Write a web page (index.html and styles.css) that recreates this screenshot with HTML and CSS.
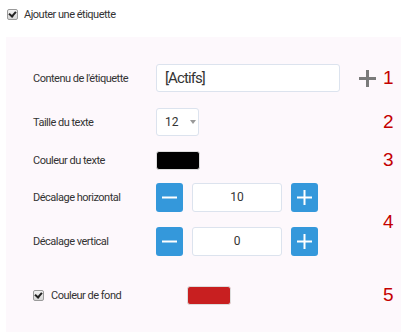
FILE: index.html
```html
<!DOCTYPE html>
<html lang="fr">
<head>
  <meta charset="UTF-8" />
  <title>Étiquette</title>
  <link rel="stylesheet" href="styles.css">
</head>
<body>
  <label class="toggle">
    <span class="check"></span> Ajouter une étiquette
  </label>

  <div class="panel">
    <div class="label r1">Contenu de l'étiquette</div>
    <div class="control r1">
      <div class="text-input">[Actifs]</div>
      <svg class="add" width="17" height="17" viewBox="0 0 17 17">
        <rect x="7" y="0" width="3" height="17" fill="#7a7a7a"/>
        <rect x="0" y="7" width="17" height="3" fill="#7a7a7a"/>
      </svg>
    </div>
    <div class="num r1">1</div>

    <div class="label r2">Taille du texte</div>
    <div class="control r2">
      <div class="select">12 <span class="arrow"></span></div>
    </div>
    <div class="num r2">2</div>

    <div class="label r3">Couleur du texte</div>
    <div class="control r3"><div class="swatch black"></div></div>
    <div class="num r3">3</div>

    <div class="label r4">Décalage horizontal</div>
    <div class="control r4">
      <div class="stepper">
        <button class="step"><svg width="15" height="15" viewBox="0 0 15 15"><rect x="0" y="6.5" width="15" height="2" fill="#fff"/></svg></button>
        <div class="value">10</div>
        <button class="step"><svg width="15" height="15" viewBox="0 0 15 15"><rect x="0" y="6.5" width="15" height="2" fill="#fff"/><rect x="6.5" y="0" width="2" height="15" fill="#fff"/></svg></button>
      </div>
    </div>
    <div class="num r45">4</div>

    <div class="label r5">Décalage vertical</div>
    <div class="control r5">
      <div class="stepper">
        <button class="step"><svg width="15" height="15" viewBox="0 0 15 15"><rect x="0" y="6.5" width="15" height="2" fill="#fff"/></svg></button>
        <div class="value">0</div>
        <button class="step"><svg width="15" height="15" viewBox="0 0 15 15"><rect x="0" y="6.5" width="15" height="2" fill="#fff"/><rect x="6.5" y="0" width="2" height="15" fill="#fff"/></svg></button>
      </div>
    </div>

    <div class="label r6 with-check"><span class="check"></span> Couleur de fond</div>
    <div class="control r6"><div class="swatch red"></div></div>
    <div class="num r6">5</div>
  </div>
</body>
</html>
```

FILE: styles.css
```css
body {
  margin: 0;
  background: #fff;
  font-family: Roboto, "Liberation Sans", sans-serif;
  color: #333;
}
.toggle {
  display: flex;
  align-items: center;
  gap: 6px;
  height: 28px;
  padding-left: 7px;
  font-size: 11px;
  letter-spacing: -0.5px;
}
.check {
  width: 9px;
  height: 9px;
  border: 1px solid #9a9a9a;
  border-radius: 2px;
  background: linear-gradient(#f2f2f2, #d6d6d6);
  position: relative;
}
.check::after {
  content: "";
  position: absolute;
  left: 2px;
  top: 0px;
  width: 3px;
  height: 5px;
  border: solid #222;
  border-width: 0 2px 2px 0;
  transform: rotate(40deg);
}
.panel {
  margin: 9px 2px 0 6px;
  background: #fdf8fc;
  padding: 19px 0 6px 27px;
  display: grid;
  grid-template-columns: 123px 227px 1fr;
  grid-template-rows: 44px 44px 32px 43px 45px 62px;
  align-items: center;
}
.label {
  font-size: 11px;
  letter-spacing: -0.5px;
}
.with-check {
  display: flex;
  align-items: center;
  gap: 7px;
}
.control {
  display: flex;
  align-items: center;
}
.r1 { grid-row: 1; }
.r2 { grid-row: 2; }
.r3 { grid-row: 3; }
.r4 { grid-row: 4; }
.r5 { grid-row: 5; }
.r6 { grid-row: 6; }
.r45 { grid-row: 4 / 6; padding-top: 4px; }
.num {
  grid-column: 3;
  font-family: "Liberation Sans", Arial, sans-serif;
  font-size: 19px;
  color: #c40000;
}
.text-input {
  box-sizing: border-box;
  width: 184px;
  height: 28px;
  border: 1px solid #dce3ee;
  border-radius: 3px;
  background: #fff;
  padding-left: 8px;
  font-size: 15px;
  letter-spacing: -0.9px;
  line-height: 26px;
}
.add {
  margin-left: 19px;
}
.select {
  box-sizing: border-box;
  width: 43px;
  height: 28px;
  border: 1px solid #dce3ee;
  border-radius: 3px;
  background: #fff;
  padding-left: 8px;
  font-size: 12px;
  line-height: 24px;
  display: flex;
  align-items: center;
  gap: 11px;
}
.arrow {
  width: 0;
  height: 0;
  border-left: 3px solid transparent;
  border-right: 3px solid transparent;
  border-top: 4px solid #999;
}
.swatch {
  box-sizing: border-box;
  width: 44px;
  height: 19px;
  border-radius: 3px;
  border: 1px solid #ddd;
}
.black { background: #000; }
.red {
  background: #c81f20;
  margin-left: 31px;
}
.stepper {
  display: flex;
  align-items: center;
  gap: 9px;
}
.step {
  width: 27px;
  height: 29px;
  border: none;
  border-radius: 3px;
  background: #3498db;
  padding: 0;
  display: flex;
  align-items: center;
  justify-content: center;
}
.value {
  box-sizing: border-box;
  width: 90px;
  height: 29px;
  border: 1px solid #dce3ee;
  border-radius: 3px;
  background: #fff;
  text-align: center;
  font-size: 12px;
  line-height: 27px;
}
```
